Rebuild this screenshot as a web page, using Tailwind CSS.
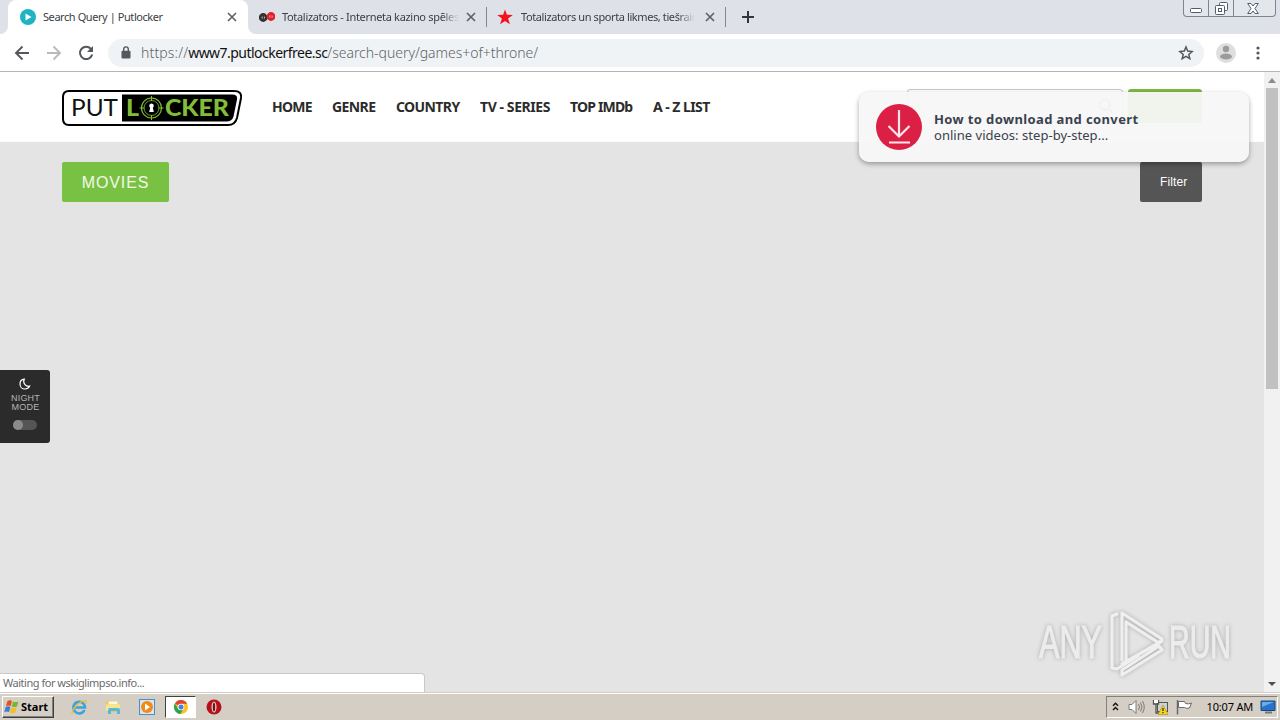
<!DOCTYPE html>
<html lang="en">
<head>
    <meta charset="UTF-8">
    <meta name="viewport" content="width=device-width, initial-scale=1.0">
    <title>Search Query | Putlocker</title>
    <script src="https://cdn.jsdelivr.net/npm/@tailwindcss/browser@4"></script>
</head>
<body class="w-[1280px] h-[720px] overflow-hidden flex flex-col bg-white font-['Noto_Sans',sans-serif] whitespace-nowrap">

    <!-- Tab strip -->
    <div class="h-[34px] shrink-0 bg-[#dee1e8] flex relative text-[#3c4043] text-[11px]">
        <div class="w-2 bg-white"><div class="h-full bg-[#dee1e8] rounded-br-lg"></div></div>
        <div class="w-[240px] bg-white rounded-t-lg flex items-center pl-3 pr-[11px]">
            <svg class="w-4 h-4 mr-[7px]" viewBox="0 0 16 16"><circle cx="8" cy="8" r="8" fill="#1fb3c4"/><path d="M5.500 4.500v7l6-3.500z" fill="#fff"/></svg>
            <span class="tracking-[-0.43px]">Search Query | Putlocker</span>
            <svg class="w-[10px] h-[10px] ml-auto" viewBox="0 0 10 10" stroke="#5f6368" stroke-width="1.700"><path d="M1 1l8 8M9 1l-8 8"/></svg>
        </div>
        <div class="w-[238px] bg-white"><div class="h-full bg-[#dee1e8] rounded-bl-lg flex items-center pl-[11px] pr-[10px]">
            <svg class="w-4 h-4 mr-[7px] shrink-0" viewBox="0 0 16 16" fill="none"><circle cx="4.200" cy="8.500" r="3" stroke="#333" stroke-width="2.800"/><path d="M4.200 6.500v4" stroke="#333" stroke-width="1.500"/><circle cx="12" cy="7.500" r="3" stroke="#e3202b" stroke-width="2.800"/><path d="M12 5.500v4" stroke="#e3202b" stroke-width="1.500"/></svg>
            <span class="w-[177px] overflow-hidden tracking-[-0.32px] mask-r-from-90%">Totalizators - Interneta kazino spēles</span>
            <svg class="w-[10px] h-[10px] ml-auto shrink-0" viewBox="0 0 10 10" stroke="#5f6368" stroke-width="1.700"><path d="M1 1l8 8M9 1l-8 8"/></svg>
        </div></div>
        <div class="w-px h-5 mt-[7px] bg-[#83868c]"></div>
        <div class="w-[238px] flex items-center pl-[10px] pr-[10px]">
            <svg class="w-4 h-4 mr-2 shrink-0" viewBox="0 0 16 16" fill="#f4121f"><path d="M8 .5l1.900 5.300 5.900.1-4.700 3.600 1.800 5.800L8 11.900l-4.900 3.400 1.800-5.800L.2 5.900l5.900-.1z"/></svg>
            <span class="w-[174px] overflow-hidden tracking-[-0.4px] mask-r-from-90%">Totalizators un sporta likmes, tiešraid</span>
            <svg class="w-[10px] h-[10px] ml-auto shrink-0" viewBox="0 0 10 10" stroke="#5f6368" stroke-width="1.700"><path d="M1 1l8 8M9 1l-8 8"/></svg>
        </div>
        <div class="w-px h-5 mt-[7px] bg-[#83868c]"></div>
        <svg class="w-3 h-3 ml-4 mt-[11px]" viewBox="0 0 12 12" stroke="#333639" stroke-width="2"><path d="M6 0v12M0 6h12"/></svg>

        <!-- Window buttons -->
        <div class="ml-auto mr-1 w-[93px] h-[17px] flex border border-t-0 border-[#7d8593] rounded-b-[4px] bg-[#e3e6eb]">
            <div class="w-[25px] border-r border-[#7d8593] flex justify-center items-end pb-[3px]"><div class="w-3 h-[5px] border border-[#525c6b] bg-white rounded-[1.500px]"></div></div>
            <div class="w-[25px] border-r border-[#7d8593] flex justify-center pt-[2px]">
                <svg class="w-[13px] h-[13px]" viewBox="0 0 13 13" fill="#fff" stroke="#525c6b"><rect x="4.500" y=".5" width="8" height="8" rx="1"/><rect x=".5" y="3.500" width="9" height="9" rx="1"/><rect x="3.500" y="6.500" width="3" height="3"/></svg>
            </div>
            <div class="flex-1 flex justify-center pt-[3px] pr-[3px]">
                <svg class="w-3 h-[11px]" viewBox="0 0 12 11" fill="#fff" stroke="#525c6b"><path d="M.7.500h3.300l2 2.500 2-2.500h3.300L8 5.500l3.300 5H8L6 8l-2 2.500H.7L4 5.500z"/></svg>
            </div>
        </div>
    </div>

    <!-- Address bar -->
    <div class="h-[38px] shrink-0 bg-white border-b border-[#b5b5b5] flex items-center pl-[14px] pr-[20px]">
        <svg class="w-4 h-4" viewBox="0 0 16 16" fill="none" stroke="#54575b" stroke-width="1.900"><path d="M15 8H2M8.500 1.500L2 8l6.500 6.500"/></svg>
        <svg class="w-4 h-4 ml-4" viewBox="0 0 16 16" fill="none" stroke="#b9babc" stroke-width="1.900"><path d="M1 8h13M7.500 1.500L14 8l-6.500 6.500"/></svg>
        <svg class="w-4 h-4 ml-4" viewBox="0 0 16 16" fill="none" stroke="#54575b" stroke-width="2"><path d="M13.300 4.300A6.200 6.200 0 1 0 14.200 9.500"/><path d="M15 1v6H9z" fill="#54575b" stroke="none"/></svg>
        <div class="ml-[14px] w-[1096px] h-7 rounded-full bg-[#f0f3f6] flex items-center pl-[13px] pr-[10px]">
            <svg class="w-[10px] h-[13px] mr-[10px]" viewBox="0 0 10 13"><rect x=".5" y="4.800" width="9" height="7.700" rx="1" fill="#54575b"/><path d="M2.700 5V3.200a2.300 2.300 0 0 1 4.600 0V5" fill="none" stroke="#54575b" stroke-width="1.400"/></svg>
            <span class="text-[14px] font-light text-[#5f6368] tracking-[-0.12px] -mt-px"><span class="tracking-[0.15px]">https://</span><span class="text-[#111] font-normal tracking-[-0.53px]">www7.putlockerfree.sc</span><span class="tracking-[-0.03px]">/search-query/games+of+throne/</span></span>
            <svg class="w-4 h-4 ml-auto" viewBox="0 0 16 16" fill="none" stroke="#54575b" stroke-width="1.500"><path d="M8 2l1.700 4.100 4.400.4-3.300 2.900 1 4.300L8 11.400l-3.800 2.300 1-4.300L1.900 6.500l4.400-.4z"/></svg>
        </div>
        <svg class="w-5 h-5 ml-3" viewBox="0 0 20 20"><circle cx="10" cy="10" r="10" fill="#dedede"/><circle cx="10" cy="6" r="3.200" fill="#9b9b9b"/><ellipse cx="10" cy="13.500" rx="6" ry="3" fill="#9b9b9b"/></svg>
        <svg class="w-1 h-[14px] ml-auto" viewBox="0 0 4 14" fill="#54575b"><circle cx="2" cy="2" r="1.600"/><circle cx="2" cy="7" r="1.600"/><circle cx="2" cy="12" r="1.600"/></svg>
    </div>

    <div class="h-[620px] shrink-0 flex relative">
        <!-- Page -->
        <div class="w-[1264px] bg-[#e4e4e4] relative">
            <header class="h-[70px] bg-white border-b border-[#fbfbfb] flex pl-[62px] pr-[62px]">
                <svg class="w-[180px] h-9 mt-[18px] mr-[30px]" viewBox="0 0 180 36">
                    <path d="M7 1h165q8 0 7 7l-4 20q-2 7-9 7H7q-6 0-6-6V7q0-6 6-6z" fill="#fff" stroke="#000" stroke-width="2"/>
                    <path d="M60 4.500h110q6 0 5 5l-3.500 17q-1.500 5-7 5H60z" fill="#000"/>
                    <text x="9" y="26" font-family="Lato, sans-serif" font-size="23" fill="#111" textLength="47" lengthAdjust="spacingAndGlyphs">PUT</text>
                    <g font-family="Lato, sans-serif" font-size="23" font-weight="900" fill="#83bd36">
                        <text x="64" y="26" textLength="13" lengthAdjust="spacingAndGlyphs">L</text>
                        <text x="103" y="26" textLength="64" lengthAdjust="spacingAndGlyphs">CKER</text>
                    </g>
                    <g fill="none" stroke="#83bd36"><circle cx="89.500" cy="18" r="10" stroke-width="1.200"/><circle cx="89.500" cy="18" r="7.500" stroke-width=".8"/><path d="M89.500 6v5M89.500 25v5M77.500 18h5M96.500 18h5"/></g>
                    <path d="M89.500 13.500a2.300 2.300 0 0 1 1.300 4.200l1 4.300h-4.600l1-4.300a2.300 2.300 0 0 1 1.300-4.200z" fill="#fff"/>
                </svg>
                <nav class="flex pt-[25px] text-[14px] leading-5 font-bold text-[#2b2b2b] font-['Noto_Sans',sans-serif]">
                    <a class="w-[60px] tracking-[-0.75px]">HOME</a>
                    <a class="w-[64px] tracking-[-0.6px]">GENRE</a>
                    <a class="w-[84px] tracking-[-0.6px]">COUNTRY</a>
                    <a class="w-[90px] tracking-[-0.42px]">TV - SERIES</a>
                    <a class="w-[83px] tracking-[-0.82px]">TOP IMDb</a>
                    <a class="tracking-[-0.55px]">A - Z LIST</a>
                </nav>
                <div class="ml-auto mt-[17px] w-[216px] h-[34px] border border-[#c5c7cf] rounded-[3px] flex justify-end items-center pr-2">
                    <svg class="w-4 h-4" viewBox="0 0 16 16" fill="none" stroke="#888" stroke-width="2"><circle cx="7" cy="7" r="5"/><path d="M11 11l4 4"/></svg>
                </div>
                <div class="ml-[5px] mt-[17px] w-[74px] h-[34px] rounded-[3px] bg-[#7fb942]"></div>
            </header>
            <main class="flex justify-between px-[62px] pt-5">
                <div class="w-[107px] h-10 bg-[#79c142] rounded-[2px] flex items-center justify-center pt-px text-white/90 text-[16px] tracking-[0.9px] font-['Liberation_Sans',sans-serif]">MOVIES</div>
                <div class="w-[62px] h-10 bg-[#555] rounded-[2px] flex items-center pl-5 text-white text-[12px] tracking-[0.1px] font-['Liberation_Sans',sans-serif]">Filter</div>
            </main>

            <!-- Night mode switch -->
            <div class="absolute left-0 top-[298px] w-[50px] h-[73px] bg-[#2b2b2b] rounded-r-[3px] flex flex-col items-center pt-2 text-[#b5b5b5] text-[9px] leading-[9px] font-['Liberation_Sans',sans-serif] text-center">
                <svg class="w-3 h-3 mb-1" viewBox="0 0 12 12" fill="none" stroke="#fff" stroke-width="1.200"><path d="M5.300 1.100C2.900 1.300 1 3.300 1 5.900 1 8.700 3.100 11 5.900 11c2 0 3.900-1 4.700-2.900C7.300 9 3.200 5.600 5.300 1.100z"/></svg>
                <span class="tracking-[0.2px] pl-px">NIGHT</span><span class="tracking-[0.25px] pl-px">MODE</span>
                <div class="w-6 h-[10px] mt-2 rounded-full bg-[#555]"><div class="w-[10px] h-[10px] rounded-full bg-[#8b8b8b]"></div></div>
            </div>

            <!-- Push notification -->
            <div class="absolute left-[859px] top-5 w-[390px] h-[70px] rounded-[10px] bg-[#f7f7f7]/95 shadow-[0_2px_5px_rgba(0,0,0,0.35)] flex items-center pl-[17px]">
                <svg class="w-[46px] h-[46px] mr-3" viewBox="0 0 46 46"><circle cx="23" cy="23" r="23" fill="#dc1f45"/><path d="M23 6v26M12.500 22L23 32.500 33.500 22M13 38.500h21" fill="none" stroke="#ffe6e9" stroke-width="2.200"/></svg>
                <div class="text-[13px] leading-4 text-[#3a424e] font-['Noto_Sans',sans-serif]">
                    <div class="font-bold tracking-[0.38px]">How to download and convert</div>
                    <div class="tracking-[0.03px]">online videos: step-by-step...</div>
                </div>
            </div>

            <!-- Watermark -->
            <svg class="absolute left-[1034px] top-[534px] w-[204px] h-[72px] drop-shadow-[0_0_2px_rgba(0,0,0,0.25)]" viewBox="0 0 204 72" fill="none">
                <g font-family="Liberation Sans, sans-serif" font-size="47" fill="#ececec" stroke="#ececec" stroke-width="1.200">
                    <text x="5" y="52" textLength="63" lengthAdjust="spacingAndGlyphs">ANY</text>
                    <text x="135" y="52" textLength="62" lengthAdjust="spacingAndGlyphs">RUN</text>
                </g>
                <g stroke="#efefef" stroke-width="3.200" stroke-linejoin="round" stroke-linecap="round">
                    <path d="M83 8l-5 2v52l5 1 21-13"/>
                    <path d="M88 54V7l40 26-3 4-33-21v40"/>
                    <path d="M88 58l40-23M88 64v5l40-25-3-4z"/>
                </g>
            </svg>

            <div class="absolute left-0 bottom-0 w-[425px] h-[19px] bg-white border border-l-0 border-b-0 border-[#c9c9c9] rounded-tr-[4px] pl-[3px] text-[11px] leading-[18px] text-[#6b6b6b] tracking-[-0.48px]">Waiting for wskiglimpso.info...</div>
        </div>

        <!-- Scrollbar -->
        <div class="w-4 bg-[#f1f1f1] flex flex-col items-center">
            <svg class="w-4 h-4" viewBox="0 0 16 16" fill="#8b8b8b"><path d="M8 6l4 5H4z"/></svg>
            <div class="w-3 h-[301px] bg-[#c1c1c1]"></div>
            <svg class="w-4 h-4 mt-auto" viewBox="0 0 16 16" fill="#505050"><path d="M8 10l4-4H4z"/></svg>
        </div>
    </div>

    <!-- Taskbar -->
    <div class="h-7 shrink-0 bg-[#d5cec5] border-t border-[#d5cec5]">
        <div class="h-[27px] border-t border-white flex items-center pl-[2px] pr-[2px]">
            <div class="w-[52px] h-[22px] border border-t-white border-l-white border-r-[#404040] border-b-[#404040] shadow-[inset_-1px_-1px_0_#808080] flex items-center pl-px text-[11px] text-black">
                <svg class="w-4 h-4 mr-px shrink-0" viewBox="0 0 16 16"><path d="M3.500 2Q6 .5 8 2L6.700 7Q4.500 5.800 2 7z" fill="#e8501e"/><path d="M9 2.500q2.500 1.200 5.500 0L13 7.500q-2.500 1.200-5.300 0z" fill="#76b82e"/><path d="M1.700 8q2.300-1.300 4.700 0L5 13Q2.700 11.800.3 13z" fill="#3b7dd0"/><path d="M7.400 8.500q2.500 1.300 5.300 0l-1.400 5q-2.800 1.200-5.300 0z" fill="#f7bd20"/></svg>
                <span class="font-bold">Start</span>
            </div>
            <svg class="w-4 h-4 ml-[17px]" viewBox="0 0 16 16" fill="none"><path d="M13.500 11A5.800 5.800 0 1 1 14 8.500H4" stroke="#3ba4dc" stroke-width="2.600"/><path d="M1.500 15c-3-3 9-14.500 13-13.300 1.300.4.700 2.300.2 3" stroke="#edbd35" stroke-width="1.300"/></svg>
            <svg class="w-4 h-4 ml-[18px]" viewBox="0 0 16 16"><path d="M1 2h5l1 1.500h7V13H1z" fill="#e9c861"/><path d="M3.500 2.500h9v3h-9z" fill="#fff8d8"/><path d="M1 5.500h14V12H1z" fill="#f8e48f"/><path d="M3 15v-4q0-2 2-2h8q2 0 2 2v4h-3v-3H6v3z" fill="#58b7dd"/></svg>
            <svg class="w-4 h-4 ml-[18px]" viewBox="0 0 16 16"><rect x=".5" y=".5" width="15" height="15" fill="#d8e6f3" stroke="#4c8fc8"/><circle cx="8" cy="8" r="6" fill="#f18a18"/><path d="M6 4.500v7l5-3.500z" fill="#fff"/></svg>
            <div class="w-[31px] h-[22px] ml-[10px] bg-white border border-t-[#404040] border-l-[#404040] border-white flex items-center justify-center">
                <svg class="w-[14px] h-[14px]" viewBox="0 0 14 14"><circle cx="7" cy="7" r="7" fill="#fcc31e"/><path d="M7 7L.9 3.500A7 7 0 0 1 13.100 3.700H7z" fill="#e14233"/><path d="M.9 3.500A7 7 0 0 0 6.500 14L9.500 8.500 7 7 4 8.500z" fill="#2ea453"/><circle cx="7" cy="7" r="3.300" fill="#fff"/><circle cx="7" cy="7" r="2.500" fill="#437ee7"/></svg>
            </div>
            <svg class="w-4 h-4 ml-[10px]" viewBox="0 0 16 16"><circle cx="8" cy="8" r="7.500" fill="#b3121a"/><ellipse cx="8" cy="8" rx="2.500" ry="5.500" fill="#e6d2cd"/><ellipse cx="8" cy="8" rx="1.200" ry="4.500" fill="#751015"/></svg>

            <!-- Tray -->
            <div class="ml-auto w-[172px] h-[22px] border border-t-[#808080] border-l-[#808080] border-r-white border-b-white flex items-center pl-[5px] pr-[1px]">
                <svg class="w-[7px] h-[9px] mb-px" viewBox="0 0 7 9" fill="none" stroke="#111" stroke-width="1.400"><path d="M1 3.800L3.500 1.300 6 3.800M1 8L3.500 5.500 6 8"/></svg>
                <svg class="w-[17px] h-4 ml-[9px]" viewBox="0 0 17 16" fill="none" stroke="#7a7a7a"><path d="M1 5.500h3L8 1.500v13l-4-4H1z" fill="#fff"/><path d="M10.500 5q2 3 0 6M12.500 3.500q3 4.500 0 9M14.500 2q3.500 6 0 12"/></svg>
                <svg class="w-[17px] h-4 ml-[7px]" viewBox="0 0 17 16"><rect x="5.500" y="3.500" width="10" height="9" fill="#c9d2d8" stroke="#555"/><path d="M1.500 1v4h5V1M4 5v9h4" fill="none" stroke="#555" stroke-width="1.300"/><path d="M2 1h4v3H2z" fill="#fff"/><path d="M11 6l5 9.500H6z" fill="#fbd51d" stroke="#b29200" stroke-width=".6"/><path d="M11 9v3M11 13v1.200" stroke="#222" stroke-width="1.200"/></svg>
                <svg class="w-4 h-4 ml-[7px]" viewBox="0 0 16 16" fill="#fff" stroke="#6a6a6a"><path d="M2.500 2.500h6l1 2q3 1 6-.5l-2 5q-3 1-5-.5h-6z"/><path d="M1.500 1v14.500" stroke-width="1.500"/></svg>
                <span class="ml-auto text-[11px] text-black tracking-[-0.2px]">10:07 AM</span>
                <svg class="w-4 h-[14px] ml-[7px]" viewBox="0 0 16 14"><path d="M1 1h14v9.500H1z" fill="#2873c7" stroke="#174885"/><path d="M2 2h12L2 7z" fill="#68aee9"/><path d="M5 12.500h7" stroke="#777" stroke-width="2"/></svg>
            </div>
        </div>
    </div>

</body>
</html>
